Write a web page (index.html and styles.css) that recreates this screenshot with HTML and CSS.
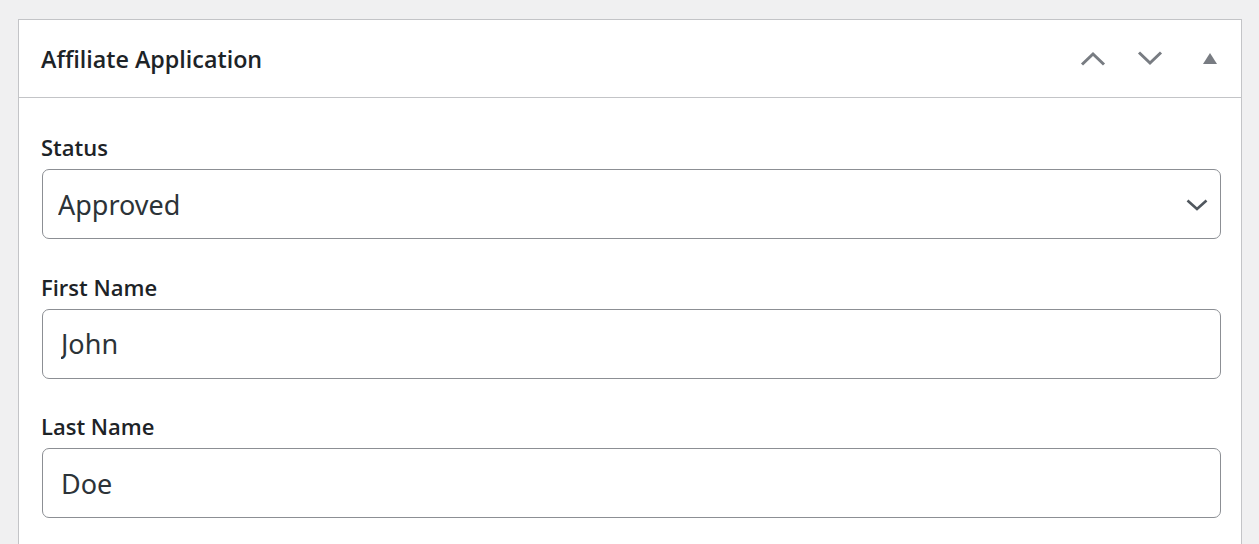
FILE: index.html
```html
<!DOCTYPE html>
<html lang="en">
<head>
  <meta charset="UTF-8" />
  <meta name="viewport" content="width=device-width, initial-scale=1" />
  <title>Affiliate Application</title>
  <link rel="stylesheet" href="styles.css">
</head>
<body>
<div class="postbox">
  <div class="postbox-header">
    <h2 class="hndle">Affiliate Application</h2>
    <div class="handle-actions">
      <button class="handle-btn" aria-label="Move up">
        <svg width="26" height="15" viewBox="0 0 26 15"><path d="M2 13.5 L13 3 L24 13.5" fill="none" stroke="#787c82" stroke-width="3"/></svg>
      </button>
      <button class="handle-btn" aria-label="Move down">
        <svg width="26" height="15" viewBox="0 0 26 15"><path d="M2 1.5 L13 12 L24 1.5" fill="none" stroke="#787c82" stroke-width="3"/></svg>
      </button>
      <button class="handle-btn handle-toggle" aria-label="Toggle panel">
        <svg width="14" height="11" viewBox="0 0 14 11"><path d="M7 0 L14 11 L0 11 Z" fill="#787c82"/></svg>
      </button>
    </div>
  </div>

  <div class="inside">
    <div class="field">
      <label for="status">Status</label>
      <div class="select-wrap">
        <select id="status">
          <option>Approved</option>
          <option>Pending</option>
          <option>Rejected</option>
        </select>
        <svg class="select-arrow" width="22" height="12" viewBox="0 0 22 12"><path d="M1.5 1.5 L11 10 L20.5 1.5" fill="none" stroke="#50575e" stroke-width="2.6"/></svg>
      </div>
    </div>

    <div class="field">
      <label for="first-name">First Name</label>
      <input type="text" id="first-name" value="John">
    </div>

    <div class="field">
      <label for="last-name">Last Name</label>
      <input type="text" id="last-name" value="Doe">
    </div>
  </div>
</div>
</body>
</html>
```

FILE: styles.css
```css
body {
  margin: 0;
  padding: 19px 17px 0 18px;
  background: #f0f0f1;
  font-family: 'Noto Sans', 'Open Sans', sans-serif;
  color: #1d2327;
}
.postbox {
  background: #fff;
  border: 1px solid #c3c4c7;
  height: 600px;
}
.postbox-header {
  display: flex;
  align-items: center;
  justify-content: space-between;
  height: 77px;
  border-bottom: 1px solid #c3c4c7;
  padding-left: 22px;
}
.hndle {
  margin: 0;
  font-family: 'Open Sans', 'Noto Sans', sans-serif;
  font-size: 23.3px;
  font-weight: 600;
  color: #1d2327;
}
.handle-actions {
  display: flex;
  align-items: center;
  height: 100%;
}
.handle-btn {
  width: 57px;
  height: 100%;
  border: none;
  background: none;
  padding: 0;
  display: flex;
  align-items: center;
  justify-content: center;
}
.handle-toggle {
  width: 63px;
}
.inside {
  padding: 34px 20px 0 22px;
}
.field {
  margin-bottom: 32.5px;
}
label {
  display: block;
  font-family: 'Open Sans', 'Noto Sans', sans-serif;
  font-size: 22px;
  font-weight: 600;
  line-height: 30px;
  margin-bottom: 7px;
}
.select-wrap {
  position: relative;
  margin-left: 1px;
}
input[type="text"] {
  margin-left: 1px;
}
select, input[type="text"] {
  display: block;
  width: calc(100% - 1px);
  height: 70px;
  box-sizing: border-box;
  border: 1px solid #8c8f94;
  border-radius: 7px;
  background: #fff;
  font-family: inherit;
  font-size: 27px;
  color: #2c3338;
}
select {
  width: 100%;
  margin: 0;
  appearance: none;
  -webkit-appearance: none;
  padding: 0 50px 0 15px;
}
input[type="text"] {
  padding: 0 18px;
}
.select-arrow {
  position: absolute;
  right: 13px;
  top: 30px;
  pointer-events: none;
}
```
